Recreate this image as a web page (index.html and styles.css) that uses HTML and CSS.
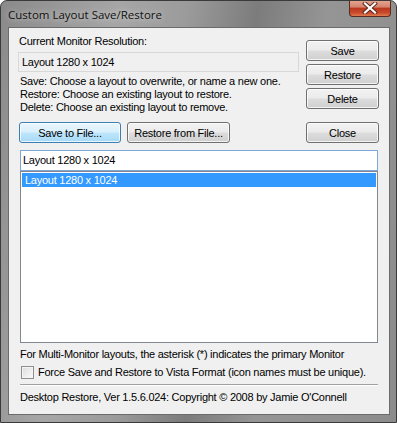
FILE: index.html
```html
<!DOCTYPE html>
<html lang="en">
<head>
    <meta charset="UTF-8">
    <title>Custom Layout Save/Restore</title>
    <link rel="stylesheet" href="styles.css">
</head>
<body>
    <div class="window">
        <!-- title bar -->
        <div class="titlebar">
            <span class="title">Custom Layout Save/Restore</span>
            <div class="close-x">
                <svg width="16" height="12" viewBox="0 0 16 12">
                    <path d="M3 1.5 L13 10.5 M13 1.5 L3 10.5" stroke="#5a2418" stroke-width="4" stroke-linecap="square"/>
                    <path d="M3 1.5 L13 10.5 M13 1.5 L3 10.5" stroke="#ffffff" stroke-width="2.2" stroke-linecap="square"/>
                </svg>
            </div>
        </div>

        <div class="client">
            <div class="top">
                <div class="left">
                    <div class="label">Current Monitor Resolution:</div>
                    <div class="readonly">Layout 1280 x 1024</div>
                    <div class="help">
                        Save: Choose a layout to overwrite, or name a new one.<br>
                        Restore: Choose an existing layout to restore.<br>
                        Delete: Choose an existing layout to remove.
                    </div>
                </div>
                <div class="right">
                    <button class="btn wide">Save</button>
                    <button class="btn wide">Restore</button>
                    <button class="btn wide">Delete</button>
                </div>
                <div class="file-row">
                    <button class="btn focus file1">Save to File...</button>
                    <button class="btn file2">Restore from File...</button>
                </div>
                <div class="close-cell">
                    <button class="btn wide">Close</button>
                </div>
            </div>

            <div class="edit">Layout 1280 x 1024</div>
            <div class="list">
                <div class="item selected">Layout 1280 x 1024</div>
            </div>

            <div class="note">For Multi-Monitor layouts, the asterisk (*) indicates the primary Monitor</div>
            <div class="check">
                <span class="box"></span>
                <span>Force Save and Restore to Vista Format (icon names must be unique).</span>
            </div>
            <div class="sep"></div>
            <div class="footer">Desktop Restore, Ver 1.5.6.024: Copyright &copy; 2008 by Jamie O'Connell</div>
        </div>
    </div>
</body>
</html>
```

FILE: styles.css
```css
body {
    margin: 0;
    font-family: "Liberation Sans", Arial, sans-serif;
    font-size: 11px;
    letter-spacing: -0.25px;
    color: #000;
    background: #fff;
}
.window {
    width: 397px;
    height: 423px;
    box-sizing: border-box;
    padding: 0 6px 7px 7px;
    display: flex;
    flex-direction: column;
    background: linear-gradient(100deg, #8a8a8a 0%, #a6a6a6 25%, #9b9b9b 40%, #7c7c7c 55%, #959595 70%, #8c8c8c 100%);
    border: 1px solid #3a3a3a;
    border-radius: 7px 7px 0 0;
    overflow: hidden;
}
.titlebar {
    height: 26px;
    flex-shrink: 0;
    display: flex;
    align-items: center;
    position: relative;
}
.title {
    font-family: "Open Sans", "Noto Sans", sans-serif;
    font-size: 11.5px;
    letter-spacing: 0;
    color: #111;
    margin-top: 1px;
    text-shadow: 0 0 6px rgba(255,255,255,0.7);
}
.close-x {
    position: absolute;
    top: -1px;
    right: -1px;
    width: 42px;
    height: 17px;
    box-sizing: border-box;
    border: 1px solid #5e2a1e;
    border-top: none;
    border-radius: 0 0 4px 4px;
    background: linear-gradient(#e7a996 0%, #d4826c 45%, #b8371d 50%, #c94a2c 80%, #e07a4e 100%);
    display: flex;
    align-items: center;
    justify-content: center;
}
.client {
    flex: 1;
    min-height: 0;
    background: #f0f0f0;
    border: 1px solid #6b6b6b;
    padding: 0 11px 0 9px;
    display: flex;
    flex-direction: column;
}
.top {
    display: grid;
    grid-template-columns: 281px 1fr;
    column-gap: 7px;
}
.left {
    padding-top: 7px;
}
.label {
    line-height: 13px;
    padding-left: 1px;
}
.readonly {
    margin-top: 4px;
    height: 18px;
    line-height: 18px;
    border: 1px solid #d8d8d8;
    background: #f0f0f0;
    padding-left: 3px;
}
.help {
    margin-top: 3px;
    line-height: 13px;
    padding-left: 2px;
}
.right {
    padding-top: 12px;
    display: flex;
    flex-direction: column;
    gap: 3px;
}
.btn {
    font-family: "Liberation Sans", Arial, sans-serif;
    font-size: 11px;
    letter-spacing: -0.25px;
    height: 21px;
    padding: 0;
    color: #000;
    border: 1px solid #707070;
    border-radius: 3px;
    background: linear-gradient(#f2f2f2 0%, #ebebeb 48%, #dddddd 52%, #cfcfcf 100%);
    box-shadow: inset 0 0 0 1px rgba(255,255,255,0.75);
}
.btn.wide {
    width: 73px;
}
.btn.focus {
    border-color: #3c7fb1;
    background: linear-gradient(#eaf6fd 0%, #d9f0fc 48%, #bee6fd 52%, #a7d9f5 100%);
}
.file-row {
    display: flex;
    gap: 6px;
    padding-top: 8px;
    padding-left: 1px;
}
.file1 {
    width: 102px;
}
.file2 {
    width: 103px;
}
.close-cell {
    padding-top: 8px;
}
.edit {
    margin: 7px 0 0 2px;
    height: 19px;
    line-height: 19px;
    border: 1px solid #7ea7d6;
    background: #fff;
    padding-left: 2px;
}
.list {
    margin-left: 2px;
    height: 168px;
    flex-shrink: 0;
    border: 1px solid #828790;
    background: #fff;
    padding: 1px;
}
.item {
    height: 14px;
    line-height: 14px;
    padding-left: 3px;
}
.item.selected {
    background: #3399ff;
    color: #fff;
}
.note {
    margin-top: 5px;
    padding-left: 2px;
    line-height: 13px;
    white-space: nowrap;
}
.check {
    margin-top: 5px;
    padding-left: 3px;
    display: flex;
    align-items: center;
    gap: 4px;
    line-height: 13px;
    white-space: nowrap;
}
.box {
    width: 11px;
    height: 11px;
    flex-shrink: 0;
    border: 1px solid #8f8f8f;
    background: linear-gradient(135deg, #dcdcdc, #fbfbfb);
    box-shadow: inset 0 0 0 1px #f4f4f4;
}
.sep {
    margin: 5px 0 0 2px;
    height: 1px;
    background: #a0a0a0;
    border-bottom: 1px solid #fff;
}
.footer {
    margin-top: 5px;
    padding-left: 2px;
    line-height: 13px;
    white-space: nowrap;
}
```
